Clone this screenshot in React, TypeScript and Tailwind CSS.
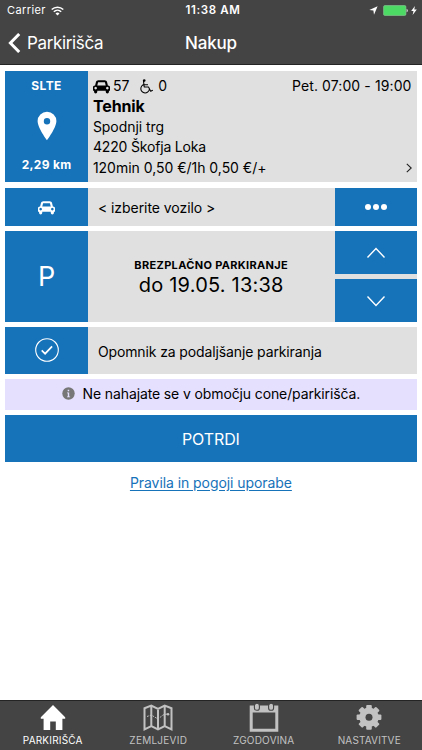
import type { ReactNode } from 'react';

interface TabProps {
  label: string;
  active?: boolean;
  labelClass?: string;
  children: ReactNode;
}

const CarIcon = ({ className = '' }: { className?: string }) => (
  <svg viewBox="0 0 2048 1792" fill="currentColor" className={className}>
    <path d="M480 1088q0-66-47-113t-113-47-113 47-47 113 47 113 113 47 113-47 47-113zm36-320h1016l-89-357q-2-8-14-17.5t-21-9.5h-768q-9 0-21 9.5t-14 17.5zm1372 320q0-66-47-113t-113-47-113 47-47 113 47 113 113 47 113-47 47-113zm160-96v384q0 14-9 23t-23 9h-96v128q0 80-56 136t-136 56-136-56-56-136v-128h-1024v128q0 80-56 136t-136 56-136-56-56-136v-128h-96q-14 0-23-9t-9-23v-384q0-93 65.5-158.5t158.5-65.5h28l105-419q23-94 104-157.5t179-63.5h768q98 0 179 63.5t104 157.5l105 419h28q93 0 158.5 65.5t65.5 158.5z" />
  </svg>
);

const WheelchairIcon = ({ className = '' }: { className?: string }) => (
  <svg viewBox="0 0 1600 1792" fill="currentColor" className={className}>
    <path d="M1023 1123l102 204q-58 179-210 290t-339 111q-156 0-288.5-77.5t-210-210-77.5-288.5q0-181 104.5-330t274.5-211l17 131q-122 54-195 165.5t-73 244.5q0 185 131.5 316.5t316.5 131.5q126 0 232.5-65t165-175.5 49.5-236.5zm440 152l58 114-256 128q-13 7-29 7-40 0-57-35l-239-477h-472q-24 0-42.5-16.5t-21.5-40.5l-96-779q-2-17 6-42 14-51 57-82.5t97-31.5q66 0 113 47t47 113q0 69-52 117.5t-120 41.5l37 289h423v128h-407l16 128h455q40 0 57 35l228 455z" />
  </svg>
);

const Chevron = ({ d, className = '' }: { d: string; className?: string }) => (
  <svg viewBox="0 0 20 12" fill="none" stroke="currentColor" strokeWidth="1.4" className={className}>
    <path d={d} />
  </svg>
);

const Tab = ({ label, active = false, labelClass = '', children }: TabProps) => (
  <button
    className={`flex flex-1 flex-col items-center pt-[2px] ${active ? 'text-white' : 'text-[#c2c2c2]'}`}
  >
    <svg width="30" height="30" viewBox="0 0 30 30" fill="currentColor">
      {children}
    </svg>
    <span className={`mt-[1px] whitespace-nowrap text-[10px] leading-[12px] ${labelClass}`}>{label}</span>
  </button>
);

const App = () => (
  <div className="flex h-[750px] w-[422px] flex-col overflow-hidden bg-white font-['Inter',sans-serif] text-black">
    <header className="h-[65px] shrink-0 border-b border-[#242424] bg-[#444] text-white">
      {/* Status bar */}
      <div className="grid h-[21px] grid-cols-3 items-center pl-[7px] pr-[5px] text-[11px]">
        <div className="flex items-center gap-[5px]">
          <span className="tracking-[0.4px]">Carrier</span>
          <svg width="13" height="10" viewBox="0 0 13 10" fill="none" stroke="white" strokeWidth="1.5">
            <path d="M0.7 3.5a8.4 8.4 0 0 1 11.6 0M2.8 5.7a5.4 5.4 0 0 1 7.4 0" />
            <path d="M4.5 7.5a3 3 0 0 1 4 0L6.5 9.6z" fill="white" stroke="none" />
          </svg>
        </div>
        <span className="pl-[2px] pt-px text-center text-[11.5px] font-semibold tracking-[0.6px]">11:38 AM</span>
        <div className="flex items-center justify-end">
          <svg width="9" height="9" viewBox="0 0 9 9" fill="white">
            <path d="M8.6 0.3L5 8.7 4.4 4.6 0.3 4z" />
          </svg>
          <svg width="25" height="11" viewBox="0 0 25 11" className="ml-[5px]">
            <rect x="0.6" y="0.6" width="22.3" height="9.8" rx="1.2" fill="#4cd964" stroke="#8fcf9a" strokeWidth="0.6" />
            <path d="M23.6 3.7q1.2 0.4 1.2 1.8t-1.2 1.8z" fill="#ddd" />
          </svg>
          <svg width="6" height="9" viewBox="0 0 6 9" fill="white" className="ml-[3px]">
            <path d="M3.9 0L0.2 5h2.3L1.6 9 5.8 3.6H3.3z" />
          </svg>
        </div>
      </div>

      {/* Navigation bar */}
      <div className="grid h-[44px] grid-cols-3 items-center pl-[8px] text-[17px]">
        <button className="flex items-center gap-[6px]">
          <svg width="13" height="20" viewBox="0 0 13 20" fill="none" stroke="white" strokeWidth="3">
            <path d="M11.2 1L2.4 10l8.8 9" />
          </svg>
          <span className="pt-px tracking-[-0.35px]">Parkirišča</span>
        </button>
        <h1 className="pr-[8px] pt-px text-center font-medium tracking-[-0.2px]">Nakup</h1>
      </div>
    </header>

    <main className="flex flex-1 flex-col gap-[5.3px] pl-[5.3px] pr-[5.5px] pt-[6px]">
      {/* Parking place */}
      <section className="flex h-[111.3px] bg-[#e0e0e0]">
        <div className="flex w-[82.6px] flex-col items-center justify-between bg-[#1672b9] pb-[9px] pt-[7px] text-[12px] font-bold leading-[16px] text-white">
          <span className="tracking-[0.4px]">SLTE</span>
          <svg width="20" height="30" viewBox="0 0 20 30" fill="white" fillRule="evenodd">
            <path d="M10 0.7a9.4 9.4 0 0 0-9.4 9.4C0.6 17 10 29.3 10 29.3S19.4 17 19.4 10.1A9.4 9.4 0 0 0 10 0.7zM10 7a3.2 3.2 0 1 1 0 6.4A3.2 3.2 0 0 1 10 7z" />
          </svg>
          <span className="tracking-[0.3px]">2,29 km</span>
        </div>
        <div className="flex-1 pl-[5px] pr-[5px] pt-[5px] text-[14px] leading-[20.4px]">
          <div className="flex items-center">
            <CarIcon className="h-[15px] w-[17px]" />
            <span className="ml-[3px]">57</span>
            <WheelchairIcon className="ml-[11px] h-[15px] w-[14px]" />
            <span className="ml-[4px]">0</span>
            <span className="ml-auto tracking-[0.1px]">Pet. 07:00 - 19:00</span>
          </div>
          <div className="text-[16px] font-bold tracking-[-0.1px]">Tehnik</div>
          <div className="tracking-[-0.05px]">Spodnji trg</div>
          <div className="tracking-[-0.17px]">4220 Škofja Loka</div>
          <div className="flex items-center justify-between">
            <span className="tracking-[-0.02px]">120min 0,50 €/1h 0,50 €/+</span>
            <svg width="6" height="10" viewBox="0 0 6 10" fill="none" stroke="#222" strokeWidth="1.1">
              <path d="M0.8 0.8L5.2 5 0.8 9.2" />
            </svg>
          </div>
        </div>
      </section>

      {/* Vehicle */}
      <section className="flex h-[38.6px] bg-[#e0e0e0]">
        <div className="flex w-[82.6px] items-center justify-center bg-[#1672b9] pt-[2px] text-white">
          <CarIcon className="h-[15px] w-[17px]" />
        </div>
        <div className="flex flex-1 items-center pl-[10px] pt-[2px] text-[14px] tracking-[-0.05px]">&lt; izberite vozilo &gt;</div>
        <button className="flex w-[82px] items-center justify-center gap-[2px] bg-[#1672b9]">
          <span className="size-[6px] rounded-full bg-white" />
          <span className="size-[6px] rounded-full bg-white" />
          <span className="size-[6px] rounded-full bg-white" />
        </button>
      </section>

      {/* Parking time */}
      <section className="flex h-[90.5px] bg-[#e0e0e0]">
        <div className="flex w-[82.6px] items-center justify-center bg-[#1672b9] pt-px text-[27px] text-white">P</div>
        <div className="flex flex-1 flex-col items-center justify-center">
          <span className="text-[11px] font-bold leading-[16px] tracking-[0.33px]">BREZPLAČNO PARKIRANJE</span>
          <span className="text-[20px] leading-[24px] tracking-[0.2px]">do 19.05. 13:38</span>
        </div>
        <div className="flex w-[82px] flex-col gap-[5px] text-white">
          <button className="flex flex-1 items-center justify-center bg-[#1672b9]">
            <Chevron d="M1.5 10.5L10 1.5l8.5 9" className="h-[12px] w-[20px]" />
          </button>
          <button className="flex flex-1 items-center justify-center bg-[#1672b9]">
            <Chevron d="M1.5 1.5l8.5 9 8.5-9" className="h-[12px] w-[20px]" />
          </button>
        </div>
      </section>

      {/* Reminder */}
      <section className="flex h-[46.5px] bg-[#e0e0e0]">
        <div className="flex w-[82.6px] items-center justify-center bg-[#1672b9] pb-px">
          <svg width="24" height="24" viewBox="0 0 24 24" fill="none" stroke="white">
            <circle cx="12" cy="12" r="11.3" strokeWidth="1.1" />
            <path d="M6.7 12.4l3.4 3.3 7-7.3" strokeWidth="1.7" />
          </svg>
        </div>
        <div className="flex flex-1 items-center pl-[10px] pt-[1px] text-[14px] tracking-[-0.12px]">
          Opomnik za podaljšanje parkiranja
        </div>
      </section>

      <div className="flex h-[30.5px] items-center justify-center gap-[8px] bg-[#e6e0ff] pb-px text-[14px]">
        <svg width="13" height="13" viewBox="0 0 13 13">
          <circle cx="6.5" cy="6.5" r="6.2" fill="#777" />
          <path d="M5 5.4h2.2v4h0.9v0.9H5v-0.9h0.8V6.3H5zM5.7 2.7h1.5v1.5H5.7z" fill="#e6e0ff" />
        </svg>
        <span className="tracking-[-0.12px]">Ne nahajate se v območju cone/parkirišča.</span>
      </div>

      <button className="h-[47.5px] bg-[#1672b9] text-[16px] tracking-[-0.1px] text-white">POTRDI</button>

      <a href="#" className="mt-[4px] self-center text-[14px] tracking-[-0.07px] text-[#1672b9] underline underline-offset-2">
        Pravila in pogoji uporabe
      </a>
    </main>

    <nav className="flex h-[50px] shrink-0 border-t border-[#242424] bg-[#444]">
      <Tab label="PARKIRIŠČA" active labelClass="tracking-[0.2px]">
        <path d="M15 2L2.8 14.3v1.4h2.8v11.3h6.6v-8.6h5.6V27h6.6V15.7h2.8v-1.4z" />
      </Tab>
      <Tab label="ZEMLJEVID" labelClass="tracking-[0.25px]">
        <path
          d="M1.5 5.2L8.3 2.6l6.7 3.2 6.7-3.2 6.8 2.6v21.2l-6.8-3.2-6.7 3.2-6.7-3.2-6.8 3.2zM8.3 2.6v20.6M15 5.8v20.6M21.7 2.6v20.6"
          fill="none"
          stroke="currentColor"
          strokeWidth="2"
        />
        <path d="M4 13.5l4.3-1.5 6.7 4 5-4 4-1" fill="none" stroke="currentColor" strokeDasharray="1.8 1.2" />
        <circle cx="25" cy="11.2" r="1.3" />
      </Tab>
      <Tab label="ZGODOVINA" labelClass="tracking-[0.2px]">
        <path fillRule="evenodd" d="M0.7 2.4h28.6v26.4H0.7zM3.7 9.5v16.3h22.6V9.5z" />
        <rect x="5.4" y="0.3" width="5" height="7" rx="2.4" stroke="#444" strokeWidth="1.1" />
        <rect x="19.6" y="0.3" width="5" height="7" rx="2.4" stroke="#444" strokeWidth="1.1" />
      </Tab>
      <Tab label="NASTAVITVE" labelClass="tracking-[0.15px]">
        <g>
          <circle cx="15" cy="14.3" r="9.7" />
          {[0, 45, 90, 135].map((angle) => (
            <rect key={angle} x="12.2" y="1.9" width="5.6" height="24.8" rx="1" transform={`rotate(${angle} 15 14.3)`} />
          ))}
          <circle cx="15" cy="14.3" r="3.5" fill="#444" />
        </g>
      </Tab>
    </nav>
  </div>
);

export default App;
